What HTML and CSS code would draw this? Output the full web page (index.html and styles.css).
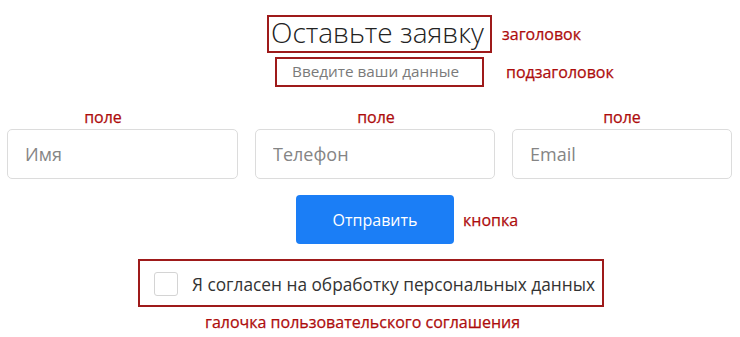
FILE: index.html
```html
<!DOCTYPE html>
<html lang="ru">
<head>
<meta charset="utf-8">
<title>Оставьте заявку</title>
<link rel="stylesheet" href="styles.css">
</head>
<body>
<form class="page">
  <div class="title-row">
    <h1 class="title mark">Оставьте заявку</h1>
    <span class="note">заголовок</span>
  </div>
  <div class="sub-row">
    <p class="subtitle mark">Введите ваши данные</p>
    <span class="note">подзаголовок</span>
  </div>
  <div class="fields">
    <label class="field field-name">
      <span class="note field-note">поле</span>
      <input class="input" type="text" placeholder="Имя">
    </label>
    <label class="field field-phone">
      <span class="note field-note">поле</span>
      <input class="input" type="tel" placeholder="Телефон">
    </label>
    <label class="field field-email">
      <span class="note field-note">поле</span>
      <input class="input" type="email" placeholder="Email">
    </label>
  </div>
  <div class="btn-row">
    <button class="submit" type="button">Отправить</button>
    <span class="note">кнопка</span>
  </div>
  <div class="agree-row">
    <label class="agree mark">
      <span class="check"></span>
      <span class="agree-text">Я согласен на обработку персональных данных</span>
    </label>
  </div>
  <div class="caption note">галочка пользовательского соглашения</div>
</form>
</body>
</html>
```
FILE: styles.css
```css
* { box-sizing: border-box; }
html, body { margin: 0; padding: 0; background: #fff; }
body {
  width: 740px;
  height: 337px;
  overflow: hidden;
  font-family: "Open Sans", "Noto Sans", sans-serif;
  color: #333;
}
.page { display: flex; flex-direction: column; }

.mark { border: 2px solid #9e1a1a; }
.note {
  color: #ad0c0c;
  font-size: 16px;
  font-weight: 400;
  line-height: 20px;
  -webkit-text-stroke: 0.25px #ad0c0c;
}

.title-row {
  display: flex;
  align-items: center;
  gap: 10px;
  padding-left: 267px;
  margin-top: 15px;
}
.title {
  margin: 0;
  width: 225px;
  padding: 0 0 4px 2px;
  font-size: 28px;
  font-weight: 300;
  line-height: 30px;
  color: #222;
  white-space: nowrap;
}

.sub-row {
  display: flex;
  align-items: center;
  gap: 22px;
  padding-left: 275px;
  margin-top: 4px;
}
.subtitle {
  margin: 0;
  width: 209px;
  padding: 0 0 2px 15px;
  font-size: 15.3px;
  font-weight: 400;
  line-height: 24px;
  color: #7a7a7a;
  white-space: nowrap;
}

.fields {
  display: flex;
  gap: 17px;
  padding-left: 7px;
  margin-top: 20px;
}
.field { display: flex; flex-direction: column; gap: 2px; }
.field-name { width: 231px; }
.field-phone { width: 240px; }
.field-email { width: 220px; }
.field-note { text-align: center; }
.field-name .field-note { padding-right: 39px; }
.field-phone .field-note { padding-left: 2px; }

.input {
  height: 50px;
  width: 100%;
  border: 1px solid #dcdcdc;
  border-radius: 5px;
  padding: 0 0 0 17px;
  font-family: inherit;
  font-size: 18px;
  color: #333;
  outline: none;
  background: #fff;
}
.input::placeholder { color: #858585; }

.btn-row {
  display: flex;
  align-items: center;
  gap: 9px;
  padding-left: 296px;
  margin-top: 16px;
}
.submit {
  width: 158px;
  height: 49px;
  border: 0;
  border-radius: 4px;
  background: #1b7ef6;
  color: #fff;
  font-family: inherit;
  font-size: 16px;
  font-weight: 400;
  padding: 0;
}

.agree-row {
  display: flex;
  padding-left: 138px;
  margin-top: 15px;
}
.agree {
  width: 466px;
  height: 48px;
  display: flex;
  align-items: center;
  gap: 14px;
  padding: 2px 0 0 14px;
}
.check {
  width: 24px;
  height: 24px;
  border: 1px solid #d4d4d4;
  border-radius: 3px;
  background: #fff;
  flex: none;
}
.agree-text {
  font-size: 17.3px;
  color: #333;
  white-space: nowrap;
}

.caption {
  padding-left: 205px;
  margin-top: 5px;
}
```
